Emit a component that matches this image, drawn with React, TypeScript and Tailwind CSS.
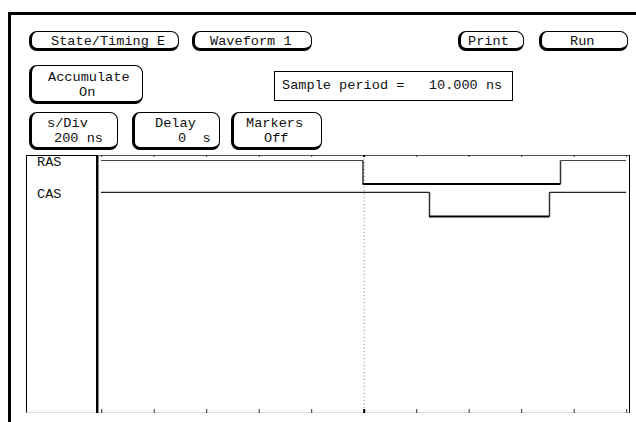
import type { ReactNode } from 'react';

const ticks = Array.from({ length: 11 }, (_, i) => 101.7 + i * 52.5);

function SoftKey({ className, children }: { className: string; children: ReactNode }) {
  return (
    <div
      className={`flex shrink-0 flex-col justify-center rounded-[8px] border-t border-r border-b-[3px] border-l-[3px] border-black bg-white leading-[15px] ${className}`}
    >
      {children}
    </div>
  );
}

function Waveforms() {
  // local coords: x = screen x - 96, y = screen y - 155
  const t = (x: number) => x - 96;
  return (
    <svg width="540" height="258" viewBox="0 0 540 258" className="block shrink-0">
      <line x1="1" y1="0" x2="1" y2="258" stroke="#000" strokeWidth="2" />
      <line x1="2.5" y1="0" x2="2.5" y2="258" stroke="#888" strokeWidth="1" />
      <line x1="3" y1="0.5" x2={t(629.5)} y2="0.5" stroke="#555" strokeWidth="1" />
      <line x1="3" y1="257.5" x2={t(629.5)} y2="257.5" stroke="#ddd" strokeWidth="1" />
      <line x1={t(629.5)} y1="0" x2={t(629.5)} y2="258" stroke="#000" strokeWidth="1" />
      {ticks.map((x) => (
        <g key={x}>
          <line x1={t(x)} y1="-1" x2={t(x)} y2="2" stroke="#333" strokeWidth="1" />
          <line x1={t(x)} y1="254" x2={t(x)} y2="258" stroke="#333" strokeWidth="1" />
        </g>
      ))}
      <line x1={t(364.2)} y1="0" x2={t(364.2)} y2="256" stroke="#777" strokeWidth="1" strokeDasharray="1 2.5" />
      <rect x={t(363.2)} y="254" width="2" height="4" fill="#000" />
      <rect x={t(363.2)} y="0" width="2" height="2" fill="#000" />

      {/* RAS */}
      <line x1={t(101)} y1="5.5" x2={t(363)} y2="5.5" stroke="#444" strokeWidth="1.2" />
      <line x1={t(363)} y1="5.5" x2={t(363)} y2="29" stroke="#333" strokeWidth="1.5" />
      <line x1={t(362.5)} y1="29" x2={t(560.5)} y2="29" stroke="#000" strokeWidth="2" />
      <line x1={t(560.5)} y1="29" x2={t(560.5)} y2="5.5" stroke="#333" strokeWidth="1.5" />
      <line x1={t(560.5)} y1="5.5" x2={t(626)} y2="5.5" stroke="#444" strokeWidth="1.2" />

      {/* CAS */}
      <line x1={t(101)} y1="37.3" x2={t(429.5)} y2="37.3" stroke="#222" strokeWidth="1.2" />
      <line x1={t(429.5)} y1="37.3" x2={t(429.5)} y2="61.5" stroke="#333" strokeWidth="1.5" />
      <line x1={t(429)} y1="61.5" x2={t(549.5)} y2="61.5" stroke="#000" strokeWidth="2" />
      <line x1={t(549.5)} y1="61.5" x2={t(549.5)} y2="37.3" stroke="#333" strokeWidth="1.5" />
      <line x1={t(549.5)} y1="37.3" x2={t(626)} y2="37.3" stroke="#222" strokeWidth="1.2" />
    </svg>
  );
}

export default function App() {
  return (
    <div className="h-[422px] w-[636px] overflow-hidden bg-white font-['Liberation_Mono',monospace] text-[13.6px] text-[#111]">
      <div className="ml-[8px] mt-[12px] h-[410px] w-[700px] border-t-[3px] border-l-[3px] border-black pl-[15px] pt-[16px]">
        <div className="flex h-[20px] whitespace-pre">
          <SoftKey className="ml-[3px] w-[150px] pt-[2px]">
            <div className="ml-[19px]">State/Timing E</div>
          </SoftKey>
          <SoftKey className="ml-[13px] w-[120px] pt-[2px]">
            <div className="ml-[15px]">Waveform 1</div>
          </SoftKey>
          <SoftKey className="ml-[146px] w-[66px] pt-[2px]">
            <div className="ml-[7px]">Print</div>
          </SoftKey>
          <SoftKey className="ml-[15px] w-[89px] pt-[2px]">
            <div className="ml-[28px]">Run</div>
          </SoftKey>
        </div>

        <div className="mt-[14px] flex h-[39px] items-start whitespace-pre">
          <SoftKey className="ml-[3px] h-[39px] w-[114px] pt-[2px]">
            <div className="ml-[16px]">Accumulate</div>
            <div className="ml-[47px]">On</div>
          </SoftKey>
          <div className="ml-[131px] mt-[6px] flex h-[30px] w-[239px] items-center border border-black pl-[7px]">
            Sample period =   10.000 ns
          </div>
        </div>

        <div className="mt-[8px] flex h-[38px] whitespace-pre">
          <SoftKey className="ml-[3px] w-[89px] pt-[1px]">
            <div className="ml-[15px]">s/Div</div>
            <div className="ml-[22px]">200 ns</div>
          </SoftKey>
          <SoftKey className="ml-[14px] w-[88px] pt-[1px]">
            <div className="ml-[20px]">Delay</div>
            <div className="ml-[43px]">0  s</div>
          </SoftKey>
          <SoftKey className="ml-[11px] w-[91px] pt-[1px]">
            <div className="ml-[12px]">Markers</div>
            <div className="ml-[30px]">Off</div>
          </SoftKey>
        </div>

        <div className="mt-[5px] flex">
          <div className="h-[258px] w-[70px] shrink-0 border-t border-l border-b border-t-black border-l-black border-b-[#ddd] pl-[10px] leading-[14px]">
            <div>RAS</div>
            <div className="mt-[18px]">CAS</div>
          </div>
          <Waveforms />
        </div>
      </div>
    </div>
  );
}
